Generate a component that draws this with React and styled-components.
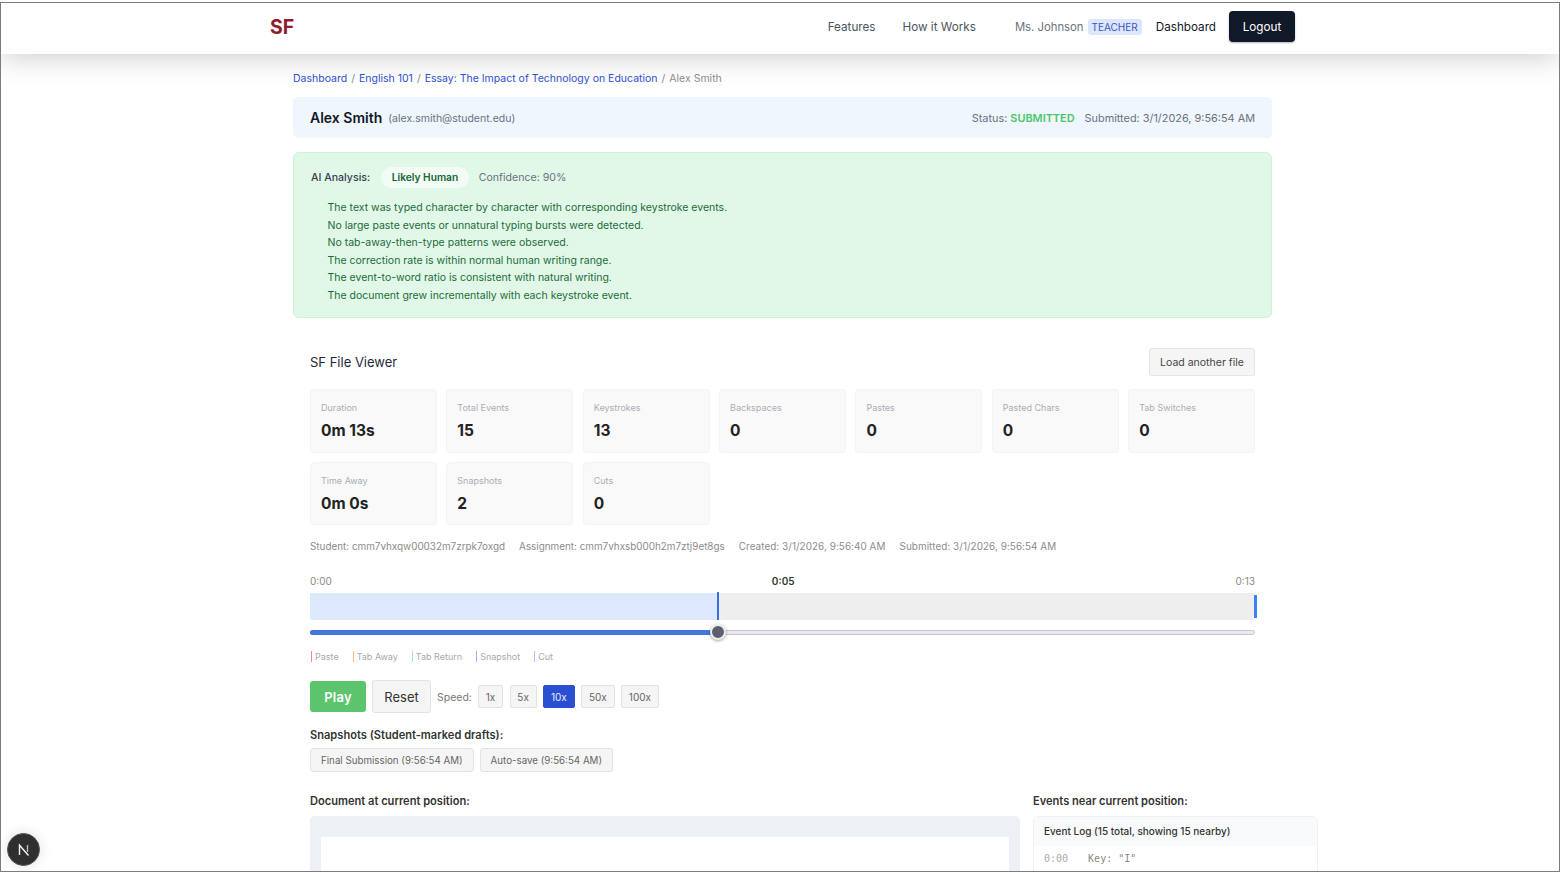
import React from "react";
import styled, { createGlobalStyle } from "styled-components";

const stats = [
  ["Duration", "0m 13s"],
  ["Total Events", "15"],
  ["Keystrokes", "13"],
  ["Backspaces", "0"],
  ["Pastes", "0"],
  ["Pasted Chars", "0"],
  ["Tab Switches", "0"],
  ["Time Away", "0m 0s"],
  ["Snapshots", "2"],
  ["Cuts", "0"],
];

const reasons = [
  "The text was typed character by character with corresponding keystroke events.",
  "No large paste events or unnatural typing bursts were detected.",
  "No tab-away-then-type patterns were observed.",
  "The correction rate is within normal human writing range.",
  "The event-to-word ratio is consistent with natural writing.",
  "The document grew incrementally with each keystroke event.",
];

const legend = [
  ["Paste", "#f08a8a"],
  ["Tab Away", "#f7b98a"],
  ["Tab Return", "#a8e6b5"],
  ["Snapshot", "#93b5f5"],
  ["Cut", "#c9b3f5"],
];

function App() {
  return (
    <Frame>
      <GlobalStyle />
      <Nav>
        <Logo>SF</Logo>
        <NavRight>
          <NavLink>Features</NavLink>
          <NavLink>How it Works</NavLink>
          <UserName>Ms. Johnson</UserName>
          <RoleBadge>TEACHER</RoleBadge>
          <DashLink>Dashboard</DashLink>
          <LogoutButton>Logout</LogoutButton>
        </NavRight>
      </Nav>
      <Main>
        <Crumbs>
          <a>Dashboard</a>
          <Sep>/</Sep>
          <a>English 101</a>
          <Sep>/</Sep>
          <a>Essay: The Impact of Technology on Education</a>
          <Sep>/</Sep>
          Alex Smith
        </Crumbs>
        <StudentCard>
          <StudentInfo>
            <StudentName>Alex Smith</StudentName>
            <StudentEmail>(alex.smith@student.edu)</StudentEmail>
          </StudentInfo>
          <StatusLine>
            Status: <b>SUBMITTED</b>
            <span>Submitted: 3/1/2026, 9:56:54 AM</span>
          </StatusLine>
        </StudentCard>
        <AnalysisCard>
          <AnalysisHead>
            <strong>AI Analysis:</strong>
            <Verdict>Likely Human</Verdict>
            <span>Confidence: 90%</span>
          </AnalysisHead>
          <ReasonList>
            {reasons.map((r) => (
              <li key={r}>{r}</li>
            ))}
          </ReasonList>
        </AnalysisCard>
        <Viewer>
          <ViewerHead>
            <ViewerTitle>SF File Viewer</ViewerTitle>
            <LoadButton>Load another file</LoadButton>
          </ViewerHead>
          <StatGrid>
            {stats.map(([label, value]) => (
              <StatCard key={label}>
                <StatLabel>{label}</StatLabel>
                <StatValue>{value}</StatValue>
              </StatCard>
            ))}
          </StatGrid>
          <MetaLine>
            <span>Student: cmm7vhxqw00032m7zrpk7oxgd</span>
            <span>Assignment: cmm7vhxsb000h2m7ztj9et8gs</span>
            <span>Created: 3/1/2026, 9:56:40 AM</span>
            <span>Submitted: 3/1/2026, 9:56:54 AM</span>
          </MetaLine>
          <TimeRow>
            <span>0:00</span>
            <b>0:05</b>
            <span>0:13</span>
          </TimeRow>
          <Timeline>
            <TimelineFill />
            <TimelineEnd />
          </Timeline>
          <Slider>
            <SliderFill />
            <SliderThumb />
          </Slider>
          <Legend>
            {legend.map(([name, color]) => (
              <LegendItem key={name} $color={color}>
                {name}
              </LegendItem>
            ))}
          </Legend>
          <Controls>
            <PlayButton>Play</PlayButton>
            <ResetButton>Reset</ResetButton>
            <SpeedLabel>Speed:</SpeedLabel>
            <SpeedButton>1x</SpeedButton>
            <SpeedButton>5x</SpeedButton>
            <SpeedButton $active>10x</SpeedButton>
            <SpeedButton>50x</SpeedButton>
            <SpeedButton>100x</SpeedButton>
          </Controls>
          <SectionTitle>Snapshots (Student-marked drafts):</SectionTitle>
          <SnapshotRow>
            <SnapshotButton>Final Submission (9:56:54 AM)</SnapshotButton>
            <SnapshotButton>Auto-save (9:56:54 AM)</SnapshotButton>
          </SnapshotRow>
          <BottomGrid>
            <div>
              <SectionTitle>Document at current position:</SectionTitle>
              <DocShell>
                <DocPage />
              </DocShell>
            </div>
            <div>
              <SectionTitle>Events near current position:</SectionTitle>
              <LogPanel>
                <LogHead>Event Log (15 total, showing 15 nearby)</LogHead>
                <LogRow>
                  <LogTime>0:00</LogTime>
                  <span>Key: "I"</span>
                </LogRow>
              </LogPanel>
            </div>
          </BottomGrid>
        </Viewer>
      </Main>
      <DevBadge>
        <svg width="16" height="16" viewBox="0 0 16 16" fill="none">
          <path d="M3.5 13V3.2L12.5 13.5" stroke="#f2f2f2" strokeWidth="1.4" />
          <path d="M11.5 3v7" stroke="#bdbdbd" strokeWidth="1.4" />
        </svg>
      </DevBadge>
    </Frame>
  );
}

export default App;

const GlobalStyle = createGlobalStyle`
  html, body {
    margin: 0;
    height: 874px;
    overflow: hidden;
    background: #fff;
    font-family: Inter, "Liberation Sans", sans-serif;
  }
  * { box-sizing: border-box; }
`;

const Frame = styled.div`
  position: relative;
  margin-top: 2px;
  height: 870px;
  border: 1px solid #7c7c7c;
  overflow: hidden;
  background: #fff;
`;

const Nav = styled.header`
  position: relative;
  z-index: 1;
  height: 51px;
  padding: 0 264px 4px 269px;
  display: flex;
  align-items: center;
  justify-content: space-between;
  background: #fff;
  box-shadow: 0 2px 30px rgba(0, 0, 0, 0.22);
`;

const Logo = styled.div`
  font-size: 19.5px;
  font-weight: 700;
  color: #8f1d2c;
`;

const NavRight = styled.nav`
  display: flex;
  align-items: center;
  font-size: 11.7px;
`;

const NavLink = styled.a`
  color: #4b5563;
  margin-right: 27px;
`;

const UserName = styled.span`
  color: #6b7280;
  font-size: 11.3px;
  margin-left: 12px;
  margin-right: 4px;
`;

const RoleBadge = styled.span`
  background: #dbe7fd;
  color: #3b55c4;
  font-size: 10px;
  padding: 1px 4px;
  height: 16px;
  line-height: 14px;
  border-radius: 3px;
`;

const DashLink = styled.a`
  color: #111827;
  margin-left: 14px;
`;

const LogoutButton = styled.button`
  margin-left: 13px;
  width: 66px;
  height: 31px;
  border: 0;
  border-radius: 4px;
  background: #111827;
  color: #fff;
  font: inherit;
  box-shadow: 0 1px 2px rgba(0, 0, 0, 0.3);
`;

const Main = styled.main`
  width: 979px;
  margin-left: 292px;
  padding-top: 18px;
`;

const Crumbs = styled.div`
  font-size: 10.5px;
  line-height: 14px;
  color: #8b8f97;
  a {
    color: #2f52d0;
  }
`;

const Sep = styled.span`
  margin: 0 4px;
`;

const StudentCard = styled.section`
  margin-top: 11px;
  height: 41px;
  padding: 0 17px;
  display: flex;
  align-items: center;
  justify-content: space-between;
  background: #eff6fe;
  border-radius: 5px;
`;

const StudentInfo = styled.div`
  display: flex;
  align-items: center;
`;

const StudentName = styled.span`
  font-size: 14px;
  font-weight: 600;
  color: #111827;
`;

const StudentEmail = styled.span`
  margin-left: 6px;
  padding-top: 1px;
  font-size: 10.5px;
  color: #6b7280;
`;

const StatusLine = styled.div`
  font-size: 10.9px;
  color: #6b7280;
  b {
    color: #4cc66b;
    font-weight: 600;
  }
  span {
    margin-left: 10px;
  }
`;

const AnalysisCard = styled.section`
  margin-top: 14px;
  height: 166px;
  padding: 14px 17px;
  background: #e1f8e8;
  border: 1px solid #c8f5d6;
  border-radius: 6px;
`;

const AnalysisHead = styled.div`
  display: flex;
  align-items: center;
  font-size: 10.6px;
  color: #6b7280;
  strong {
    color: #374151;
    font-weight: 500;
  }
`;

const Verdict = styled.span`
  margin: 0 10px 0 11px;
  padding: 0 10.5px;
  height: 21px;
  line-height: 21px;
  border-radius: 11px;
  background: #f2fcf5;
  color: #166534;
  font-size: 10.2px;
  font-weight: 600;
`;

const ReasonList = styled.ul`
  list-style: none;
  margin: 11px 0 0;
  padding: 0 0 0 16.5px;
  font-size: 10.5px;
  line-height: 17.6px;
  color: #1d6b3a;
`;

const Viewer = styled.section`
  width: 979px;
  padding: 30px 17px 0;
`;

const ViewerHead = styled.div`
  display: flex;
  align-items: center;
  justify-content: space-between;
  height: 28px;
`;

const ViewerTitle = styled.h2`
  margin: 0;
  font-size: 13px;
  font-weight: 400;
  color: #1f2937;
`;

const LoadButton = styled.button`
  width: 106px;
  height: 28px;
  border: 1px solid #e5e5e5;
  border-radius: 3px;
  background: #f5f5f5;
  color: #444;
  font: inherit;
  font-size: 10.5px;
`;

const StatGrid = styled.div`
  margin-top: 13px;
  display: grid;
  grid-template-columns: repeat(7, 1fr);
  grid-auto-rows: 63.5px;
  gap: 9px 9.5px;
`;

const StatCard = styled.div`
  padding: 12px 10px 0;
  background: #f9f9f9;
  border: 1px solid #f3f3f3;
  border-radius: 4px;
`;

const StatLabel = styled.div`
  font-size: 9px;
  line-height: 12px;
  color: #aaaeb5;
`;

const StatValue = styled.div`
  margin-top: 7px;
  font-size: 15.5px;
  line-height: 20px;
  font-weight: 700;
  color: #222;
`;

const MetaLine = styled.div`
  margin-top: 15px;
  display: flex;
  gap: 14px;
  font-size: 9.9px;
  line-height: 12px;
  color: #8b8b8b;
  span:nth-child(n + 3) {
    letter-spacing: 0.07px;
  }
`;

const TimeRow = styled.div`
  margin-top: 23px;
  display: flex;
  justify-content: space-between;
  font-size: 10px;
  line-height: 12px;
  color: #8a8a8a;
  b {
    color: #333;
    font-weight: 600;
    margin-left: -1px;
  }
`;

const Timeline = styled.div`
  position: relative;
  margin-top: 6px;
  height: 27px;
  background: #eeeeee;
  border-radius: 3px;
`;

const TimelineFill = styled.div`
  position: absolute;
  left: 0;
  top: -1px;
  bottom: 0;
  width: 409px;
  background: linear-gradient(#dce8fb, #dce8fb) 0 1px no-repeat;
  border-right: 2px solid #3a6fe0;
  border-radius: 3px 0 0 3px;
`;

const TimelineEnd = styled.div`
  position: absolute;
  right: -2px;
  top: 2px;
  bottom: 2px;
  width: 3px;
  background: #3b82f6;
`;

const Slider = styled.div`
  position: relative;
  margin-top: 10px;
  height: 5px;
  background: #e9e9ee;
  border: 1px solid #c5c5cc;
  border-radius: 3px;
`;

const SliderFill = styled.div`
  position: absolute;
  left: -1px;
  top: -1px;
  bottom: -1px;
  width: 408px;
  background: #3f78d8;
  border-radius: 3px;
`;

const SliderThumb = styled.div`
  position: absolute;
  left: 399px;
  top: -7px;
  width: 16px;
  height: 16px;
  background: #5b6070;
  border: 2px solid #eee;
  border-radius: 50%;
  box-shadow: 0 1px 3px rgba(0, 0, 0, 0.35);
`;

const Legend = styled.div`
  margin: 16px 0 0 1px;
  display: flex;
  gap: 14px;
  font-size: 9px;
  line-height: 11px;
  color: #a9a9a9;
`;

const LegendItem = styled.span`
  padding-left: 3px;
  border-left: 1px solid ${(p) => p.$color};
`;

const Controls = styled.div`
  margin: 18px 0 15px;
  display: flex;
  align-items: center;
`;

const PlayButton = styled.button`
  width: 56px;
  height: 31px;
  border: 0;
  border-radius: 3px;
  background: #5bc46c;
  color: #fff;
  font: inherit;
  font-size: 13px;
  font-weight: 600;
  letter-spacing: 0.2px;
`;

const ResetButton = styled.button`
  margin-left: 6px;
  width: 59px;
  height: 33px;
  border: 1px solid #e2e2e2;
  border-radius: 3px;
  background: #f5f5f5;
  color: #333;
  font: inherit;
  font-size: 13px;
`;

const SpeedLabel = styled.span`
  margin: 1px 6px 0;
  font-size: 10.5px;
  color: #777;
`;

const SpeedButton = styled.button`
  margin-right: 6.5px;
  height: 23px;
  padding: 0 6.8px;
  border: 1px solid ${(p) => (p.$active ? "#2a4fd0" : "#e2e2e2")};
  border-radius: 2px;
  background: ${(p) => (p.$active ? "#2a4fd0" : "#f5f5f5")};
  color: ${(p) => (p.$active ? "#e8edff" : "#666")};
  font: inherit;
  font-size: 10px;
`;

const SectionTitle = styled.div`
  font-size: 11.1px;
  line-height: 14px;
  font-weight: 600;
  color: #333;
`;

const SnapshotRow = styled.div`
  margin-top: 6px;
  display: flex;
  gap: 6px;
`;

const SnapshotButton = styled.button`
  height: 24px;
  padding: 0 10px;
  border: 1px solid #e2e2e2;
  border-radius: 3px;
  background: #f5f5f5;
  color: #666;
  font: inherit;
  font-size: 9.75px;
`;

const BottomGrid = styled.div`
  margin-top: 22px;
  display: grid;
  grid-template-columns: 710px 285px;
  gap: 13px;
`;

const DocShell = styled.div`
  margin-top: 8px;
  height: 100px;
  padding: 21px 11px 0;
  background: #edf0f5;
  border-radius: 5px 5px 0 0;
`;

const DocPage = styled.div`
  height: 100%;
  background: #fff;
`;

const LogPanel = styled.div`
  margin-top: 8px;
  height: 100px;
  border: 1px solid #f0f0f0;
  border-radius: 5px;
`;

const LogHead = styled.div`
  height: 29px;
  padding: 0 10px;
  line-height: 28px;
  font-size: 10px;
  font-weight: 500;
  color: #333;
  background: #f9fafb;
`;

const LogRow = styled.div`
  display: flex;
  gap: 20px;
  padding: 7px 10px;
  font-family: "DejaVu Sans Mono", "Liberation Mono", monospace;
  font-size: 10px;
  line-height: 12px;
  color: #888;
`;

const LogTime = styled.span`
  color: #aaa;
`;

const DevBadge = styled.div`
  position: absolute;
  left: 6px;
  bottom: 5px;
  width: 33px;
  height: 33px;
  display: flex;
  align-items: center;
  justify-content: center;
  border-radius: 50%;
  background: #2f2f2f;
  border: 1px solid #555;
  box-shadow: 0 0 14px rgba(0, 0, 0, 0.12);
`;
